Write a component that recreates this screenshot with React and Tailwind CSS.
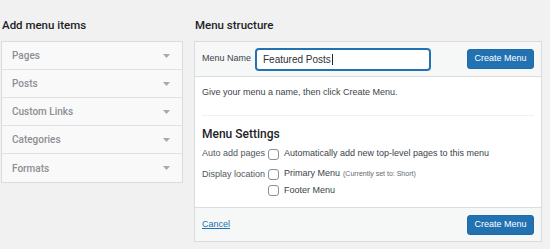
import React from "react";

function Arrow() {
  return (
    <svg width="7" height="4" viewBox="0 0 7 4" className="mr-[2px]">
      <path d="M0 0 L7 0 L3.5 4 Z" fill="#a7aaad" />
    </svg>
  );
}

function Checkbox() {
  return <span className="inline-block w-[11px] h-[11px] rounded-[3px] border border-[#8c8f94] bg-white shrink-0" />;
}

const heading = { fontFamily: "Roboto, 'Liberation Sans', sans-serif" };

export default function App() {
  const items = ["Pages", "Posts", "Custom Links", "Categories", "Formats"];
  return (
    <div
      className="w-[550px] h-[249px] bg-[#f1f1f1] flex text-[#1d2327] overflow-hidden"
      style={{ fontFamily: "'Liberation Sans', Arial, sans-serif" }}
    >
      <div className="w-[182px] ml-[1px] flex flex-col shrink-0">
        <div className="h-[41px] pt-[17px] pl-[1px] text-[11.5px] leading-[16px] font-medium" style={heading}>Add menu items</div>
        <div className="border border-[#dcdcde] bg-[#f9f9f9]">
          {items.map((it, i) => (
            <div
              key={it}
              className={`h-[28px] flex items-center justify-between pl-[10px] pr-[10px] text-[10px] font-medium text-[#8c8f94] ${i < items.length - 1 ? "border-b border-[#e2e2e4]" : "h-[27px]"}`}
              style={heading}
            >
              <span>{it}</span>
              <Arrow />
            </div>
          ))}
        </div>
      </div>

      <div className="w-[348px] ml-[11px] flex flex-col shrink-0">
        <div className="h-[41px] pt-[17px] pl-[1px] text-[11.5px] leading-[16px] font-medium" style={heading}>Menu structure</div>
        <div className="border border-[#dcdcde] bg-white">
          <div className="h-[35px] bg-[#f6f7f7] border-b border-[#dcdcde] flex items-center pl-[7px] pr-[7px]">
            <span className="text-[9px] text-[#3c434a] w-[54px]">Menu Name</span>
            <div className="w-[174px] h-[21px] rounded-[3px] border border-[#2271b1] bg-white shadow-[0_0_0_1px_#2271b1] flex items-center pl-[6px] text-[10px] text-[#2c3338]">
              Featured Posts<span className="w-[1px] h-[11px] bg-[#1d2327] ml-[1px]" />
            </div>
            <div className="ml-auto w-[67px] h-[20px] rounded-[3px] bg-[#2271b1] border border-[#1f6aa8] text-white text-[9px] flex items-center justify-center">
              Create Menu
            </div>
          </div>

          <div className="h-[130px] px-[7px] pt-[9px]">
            <div className="text-[9px] leading-[13px] text-[#3c434a]">Give your menu a name, then click Create Menu.</div>
            <div className="mt-[16px] border-t border-[#f0f0f1]" />
            <div className="mt-[10px] text-[12px] leading-[16px] font-medium" style={heading}>Menu Settings</div>
            <div className="mt-[5px] flex items-center h-[14px]">
              <span className="w-[66px] text-[9px] text-[#50575e]">Auto add pages</span>
              <Checkbox />
              <span className="ml-[5px] text-[9px] text-[#3c434a]">Automatically add new top-level pages to this menu</span>
            </div>
            <div className="mt-[6px] flex items-start">
              <span className="w-[66px] text-[9px] leading-[14px] text-[#50575e]">Display location</span>
              <div className="flex flex-col gap-[2px]">
                <div className="flex items-center h-[14px]">
                  <Checkbox />
                  <span className="ml-[5px] text-[9px] text-[#3c434a]">Primary Menu</span>
                  <span className="ml-[3px] text-[7px] text-[#646970]">(Currently set to: Short)</span>
                </div>
                <div className="flex items-center h-[15px]">
                  <Checkbox />
                  <span className="ml-[5px] text-[9px] text-[#3c434a]">Footer Menu</span>
                </div>
              </div>
            </div>
          </div>

          <div className="h-[34px] bg-[#f6f7f7] border-t border-[#dcdcde] flex items-center pl-[7px] pr-[7px]">
            <span className="text-[9px] text-[#2271b1] underline">Cancel</span>
            <div className="ml-auto w-[67px] h-[20px] rounded-[3px] bg-[#2271b1] border border-[#1f6aa8] text-white text-[9px] flex items-center justify-center">
              Create Menu
            </div>
          </div>
        </div>
      </div>
    </div>
  );
}
